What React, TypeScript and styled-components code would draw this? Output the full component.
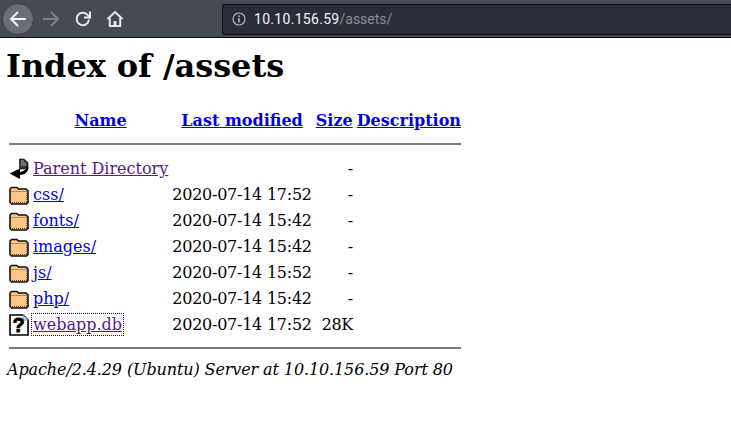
import React from "react";
import styled, { createGlobalStyle } from "styled-components";

const Global = createGlobalStyle`
  html, body { margin: 0; padding: 0; background: #fff; overflow: hidden; }
  body { font-family: "DejaVu Serif", serif; font-size: 16px; color: #000; }
`;

const Toolbar = styled.div`
  height: 37px;
  background: #464a52;
  border-bottom: 1px solid #0c0c0d;
  display: flex;
  align-items: center;
  padding-left: 2px;
  box-sizing: content-box;
`;
const RoundButton = styled.div<{ $active?: boolean }>`
  width: 32px;
  height: 32px;
  margin-right: ${(p) => (p.$active ? "1px" : "0")};
  border-radius: 50%;
  background: ${(p) => (p.$active ? "#6b6e74" : "transparent")};
  border: ${(p) => (p.$active ? "1px solid #3a3d44" : "1px solid transparent")};
  box-sizing: border-box;
  display: flex;
  align-items: center;
  justify-content: center;
`;
const UrlBar = styled.div`
  margin-left: 91px;
  flex: 1;
  height: 29px;
  margin-top: 1px;
  background: #2a2d39;
  border: 1px solid #0c0c11;
  border-right: none;
  border-radius: 3px 0 0 3px;
  display: flex;
  align-items: center;
  padding-left: 9px;
  font-family: "Roboto", sans-serif;
  font-size: 14px;
`;
const Host = styled.span`
  color: #f5f5f5;
  margin-left: 8px;
  letter-spacing: 0.3px;
`;
const Path = styled.span`
  color: #8b8d94;
`;
const Page = styled.div`
  padding: 0 6px;
`;
const Heading = styled.h1`
  font-size: 32px;
  line-height: 38px;
  font-weight: 700;
  letter-spacing: -0.06px;
  margin: 9px 0 22px;
`;
const Listing = styled.table`
  border-spacing: 2px;
  border-collapse: separate;
  margin: 0;
`;
const HeadCell = styled.th`
  padding: 0 1px;
  font-size: 16px;
  line-height: 24px;
  text-align: center;
`;
const Cell = styled.td<{ $right?: boolean }>`
  padding: 0 1px;
  height: 24px;
  line-height: 24px;
  white-space: nowrap;
  text-align: ${(p) => (p.$right ? "right" : "left")};
  vertical-align: middle;
`;
const DateCell = styled(Cell)`
  letter-spacing: -0.25px;
`;
const SizeCell = styled(Cell)`
  letter-spacing: -0.5px;
  text-align: right;
`;
const IconCell = styled(Cell)`
  padding: 0 0 0 1px;
  width: 21px;
`;
const Link = styled.a<{ $visited?: boolean; $focused?: boolean }>`
  color: ${(p) => (p.$visited ? "#551a8b" : "#0000ee")};
  text-decoration: underline;
  outline: ${(p) => (p.$focused ? "1px dotted #2a0a60" : "none")};
  outline-offset: ${(p) => (p.$focused ? "1px" : "0")};
`;
const Rule = styled.hr`
  margin: 0 1px 0 1px;
  height: 0;
  border: none;
  border-top: 2px solid #7a7a7a;
`;
const RuleCell = styled.th<{ $last?: boolean }>`
  padding: 8px 0 ${(p) => (p.$last ? "0" : "10px")};
`;
const Footer = styled.address`
  font-style: italic;
  letter-spacing: -0.11px;
  margin-top: 7px;
  padding-left: 1px;
  line-height: 24px;
`;
const IconSvg = styled.svg`
  display: block;
`;

const Back = () => (
  <svg width="20" height="20" viewBox="0 0 20 20" fill="none" stroke="#f2f2f2" strokeWidth="2">
    <path d="M18 10H3M10 3l-7 7 7 7" />
  </svg>
);
const Forward = () => (
  <svg width="20" height="20" viewBox="0 0 20 20" fill="none" stroke="#7f8186" strokeWidth="2">
    <path d="M2 10h15M10 3l7 7-7 7" />
  </svg>
);
const Reload = () => (
  <svg width="18" height="18" viewBox="0 0 18 18" fill="none" stroke="#e8e8e8" strokeWidth="2">
    <path d="M15 9.500A6.200 6.200 0 1 1 13.200 4.600L15.500 7" />
    <path d="M16 1.500V7.500H10" fill="none" />
  </svg>
);
const Home = () => (
  <svg width="18" height="18" viewBox="0 0 18 18" fill="none" stroke="#e8e8e8" strokeWidth="2">
    <path d="M1.500 9 9 2l7.500 7" />
    <path d="M3.800 8v8h10.400V8" />
    <rect x="7.600" y="11" width="2.800" height="4" fill="#e8e8e8" stroke="none" />
  </svg>
);
const Info = () => (
  <svg width="14" height="14" viewBox="0 0 14 14" fill="none">
    <circle cx="7" cy="7" r="6" stroke="#b4b5b9" strokeWidth="1.200" />
    <rect x="6.200" y="6" width="1.600" height="4.400" fill="#b4b5b9" />
    <rect x="6.200" y="3.400" width="1.600" height="1.600" fill="#b4b5b9" />
  </svg>
);
const Folder = () => (
  <IconSvg width="20" height="22" viewBox="0 0 20 22">
    <path
      d="M1 7V5l1.500-1.500h5.500L9.500 5h7.500L19 7v11.500L17.500 20h-15L1 18.500z"
      fill="#ffc68c"
      stroke="#111"
      strokeWidth="1.600"
      strokeLinejoin="round"
    />
    <path d="M2 7.500h16" stroke="#b88a58" strokeWidth="1" />
    <path d="M3 18.500h15M17.800 9v9" stroke="#5a3c20" strokeWidth="1" strokeDasharray="1 1" />
  </IconSvg>
);
const ParentIcon = () => (
  <IconSvg width="20" height="22" viewBox="0 0 20 22">
    <path d="M10.500 1h4.500l4 3.500v4.500l-4 2h-4.500z" fill="#333" stroke="#000" strokeWidth="0.600" />
    <path d="M12 3h3M12 5h5M12 7h5" stroke="#cfcfcf" strokeWidth="0.800" />
    <path d="M19.500 9c0 4.500-3 7.500-8.500 8v4L0.500 15.500 11 10.500v3.500c3.500-.5 5.500-2.500 6.500-5z" fill="#000" />
  </IconSvg>
);
const UnknownIcon = () => (
  <IconSvg width="20" height="22" viewBox="0 0 20 22">
    <path d="M1 1h13l5 5v15H1z" fill="#fff" stroke="#000" strokeWidth="1.600" />
    <path d="M14 1v5h5" fill="#ddd" stroke="#777" strokeWidth="0.800" />
    <text x="9.500" y="18" textAnchor="middle" fontFamily="'Liberation Sans', sans-serif" fontWeight="700" fontSize="20" stroke="#000" strokeWidth="0.800" fill="#000">?</text>
  </IconSvg>
);

const rows = [
  { icon: <Folder />, name: "css/", date: "2020-07-14 17:52", size: "-" },
  { icon: <Folder />, name: "fonts/", date: "2020-07-14 15:42", size: "-" },
  { icon: <Folder />, name: "images/", date: "2020-07-14 15:42", size: "-" },
  { icon: <Folder />, name: "js/", date: "2020-07-14 15:52", size: "-" },
  { icon: <Folder />, name: "php/", date: "2020-07-14 15:42", size: "-" },
];

export default function App() {
  return (
    <>
      <Global />
      <Toolbar>
        <RoundButton $active><Back /></RoundButton>
        <RoundButton><Forward /></RoundButton>
        <RoundButton><Reload /></RoundButton>
        <RoundButton><Home /></RoundButton>
        <UrlBar>
          <Info />
          <Host>10.10.156.59</Host>
          <Path>/assets/</Path>
        </UrlBar>
      </Toolbar>
      <Page>
        <Heading>Index of /assets</Heading>
        <Listing>
          <thead>
            <tr>
              <HeadCell />
              <HeadCell><Link href="#">Name</Link></HeadCell>
              <HeadCell><Link href="#">Last modified</Link></HeadCell>
              <HeadCell><Link href="#">Size</Link></HeadCell>
              <HeadCell><Link href="#">Description</Link></HeadCell>
            </tr>
            <tr>
              <RuleCell colSpan={5}><Rule /></RuleCell>
            </tr>
          </thead>
          <tbody>
            <tr>
              <IconCell><ParentIcon /></IconCell>
              <Cell><Link $visited href="#">Parent Directory</Link></Cell>
              <Cell />
              <SizeCell>-</SizeCell>
              <Cell />
            </tr>
            {rows.map((r) => (
              <tr key={r.name}>
                <IconCell>{r.icon}</IconCell>
                <Cell><Link href="#">{r.name}</Link></Cell>
                <DateCell $right>{r.date}</DateCell>
                <SizeCell>{r.size}</SizeCell>
                <Cell />
              </tr>
            ))}
            <tr>
              <IconCell><UnknownIcon /></IconCell>
              <Cell><Link $visited $focused href="#">webapp.db</Link></Cell>
              <DateCell $right>2020-07-14 17:52</DateCell>
              <SizeCell>28K</SizeCell>
              <Cell />
            </tr>
            <tr>
              <RuleCell $last colSpan={5}><Rule /></RuleCell>
            </tr>
          </tbody>
        </Listing>
        <Footer>Apache/2.4.29 (Ubuntu) Server at 10.10.156.59 Port 80</Footer>
      </Page>
    </>
  );
}
